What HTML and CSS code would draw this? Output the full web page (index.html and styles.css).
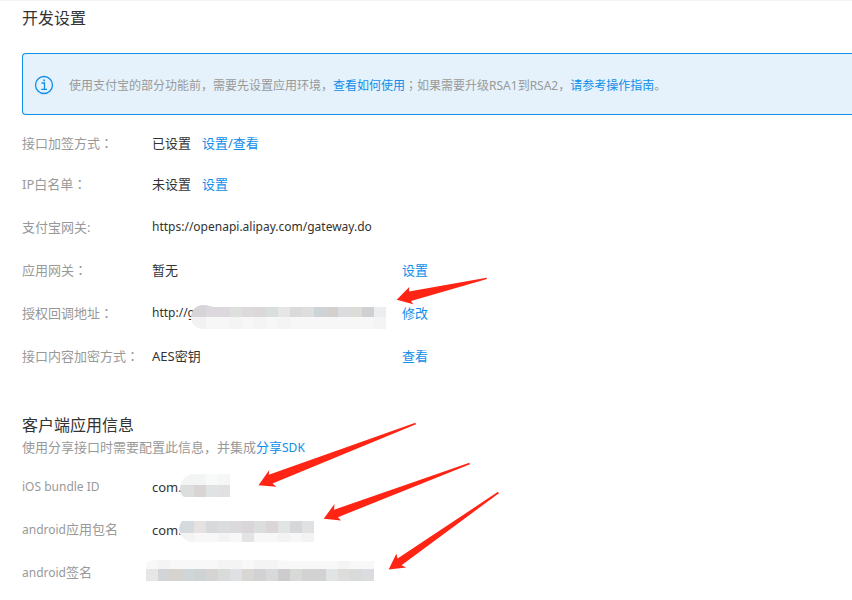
FILE: index.html
```html
<!DOCTYPE html>
<html lang="zh-CN">
<head>
    <meta charset="UTF-8">
    <meta name="viewport" content="width=device-width, initial-scale=1.0">
    <title>开发设置</title>
    <link rel="stylesheet" href="styles.css">
</head>
<body>
    <main class="page">
        <h1 class="title">开发设置</h1>

        <div class="alert">
            <svg class="alert-icon" width="20" height="20" viewBox="0 0 20 20" fill="none" stroke="currentColor" aria-hidden="true">
                <circle cx="10" cy="10" r="8.5" stroke-width="1.3"/>
                <path d="M7.5 8H10.5V14.3M7.2 14.3H13" stroke-width="1.3"/>
                <path d="M9.3 5.3H11" stroke-width="1.7"/>
            </svg>
            <p class="alert-text">使用支付宝的部分功能前，需要先设置应用环境，<a href="#">查看如何使用</a><span class="mid" lang="zh-TW">；</span>如果需要升级RSA1到RSA2，<a href="#">请参考操作指南</a>。</p>
        </div>

        <dl class="settings">
            <div class="row row-short">
                <dt>接口加签方式<span class="mid" lang="zh-TW">：</span></dt>
                <dd>已设置<a class="next" href="#">设置/查看</a></dd>
            </div>
            <div class="row row-short">
                <dt>IP白名单<span class="mid" lang="zh-TW">：</span></dt>
                <dd>未设置<a class="next" href="#">设置</a></dd>
            </div>
            <div class="row">
                <dt>支付宝网关:</dt>
                <dd class="latin">https://openapi.alipay.com/gateway.do</dd>
            </div>
            <div class="row">
                <dt>应用网关<span class="mid" lang="zh-TW">：</span></dt>
                <dd>暂无</dd>
                <dd><a href="#">设置</a></dd>
            </div>
            <div class="row">
                <dt>授权回调地址<span class="mid" lang="zh-TW">：</span></dt>
                <dd class="latin">http://g</dd>
                <dd><a href="#">修改</a></dd>
            </div>
            <div class="row">
                <dt>接口内容加密方式<span class="mid" lang="zh-TW">：</span></dt>
                <dd>AES密钥</dd>
                <dd><a href="#">查看</a></dd>
            </div>
        </dl>

        <h2 class="title">客户端应用信息</h2>
        <p class="hint">使用分享接口时需要配置此信息，并集成<a href="#">分享<span class="latin">SDK</span></a></p>

        <dl class="client">
            <div class="row">
                <dt class="latin">iOS bundle ID</dt>
                <dd>com.</dd>
            </div>
            <div class="row">
                <dt><span class="latin">android</span>应用包名</dt>
                <dd>com.</dd>
            </div>
            <div class="row">
                <dt><span class="latin">android</span>签名</dt>
                <dd></dd>
            </div>
        </dl>

        <!-- mosaics over private values, red arrows -->
        <svg class="marks" width="852" height="600" viewBox="0 0 852 600" aria-hidden="true">
            <defs>
                <clipPath id="clip-url"><path d="M203 305C208 305 211 307 216 307H386V329H203C196 329 191 323 191 317S196 305 203 305Z"/></clipPath>
                <clipPath id="clip-ios"><path d="M192 474H230V497H184C177 493 179 476 192 474Z"/></clipPath>
                <clipPath id="clip-pkg"><path d="M182 521H314V542H192C182 541 175 530 182 521Z"/></clipPath>
                <clipPath id="clip-sign"><path d="M146 564Q147 560 158 560H278L290 561H374V581H146Z"/></clipPath>
            </defs>
            <g clip-path="url(#clip-url)" shape-rendering="crispEdges">
                <path fill="#d7d4d7" d="M190 305h28v12h-28z"/>
                <path fill="#dcd8de" d="M206 307h24v10h-24z"/>
                <path fill="#dde0dc" d="M230 307h12v10h-12z"/>
                <path fill="#dcdadd" d="M242 307h12v10h-12z"/>
                <path fill="#dcd7d8" d="M254 307h12v10h-12z"/>
                <path fill="#d9dee1" d="M266 307h12v10h-12z"/>
                <path fill="#e6e6e6" d="M278 307h12v10h-12z"/>
                <path fill="#dadada" d="M290 307h12v10h-12z"/>
                <path fill="#dfdedf" d="M302 307h12v10h-12z"/>
                <path fill="#cdd4d7" d="M314 307h12v10h-12z"/>
                <path fill="#d4d0d0" d="M326 307h12v10h-12z"/>
                <path fill="#dcdce0" d="M338 307h12v10h-12z"/>
                <path fill="#dcddd8" d="M350 307h12v10h-12z"/>
                <path fill="#cfd0d2" d="M362 307h12v10h-12z"/>
                <path fill="#ebedee" d="M374 307h12v10h-12z"/>
                <path fill="#f7f7f7" d="M190 317h196v12h-196z"/>
                <path fill="#f1f2f1" d="M190 317h16v12h-16z"/>
                <path fill="#f4f4f5" d="M230 317h12v12h-12zM254 317h12v12h-12zM278 317h12v12h-12zM374 317h12v12h-12z"/>
            </g>
            <g clip-path="url(#clip-ios)" shape-rendering="crispEdges">
                <path fill="#f3f4f4" d="M178 474h28v11h-28z"/>
                <path fill="#f8faf9" d="M206 474h12v11h-12z"/>
                <path fill="#f5f7f6" d="M218 474h12v11h-12z"/>
                <path fill="#dcdddd" d="M178 485h16v12h-16z"/>
                <path fill="#d9d5d5" d="M194 485h12v12h-12z"/>
                <path fill="#e0e3e4" d="M206 485h12v12h-12z"/>
                <path fill="#e1e1e1" d="M218 485h12v12h-12z"/>
            </g>
            <g clip-path="url(#clip-pkg)" shape-rendering="crispEdges">
                <path fill="#d5dadf" d="M178 521h16v12h-16z"/>
                <path fill="#e5e2e1" d="M194 521h12v12h-12z"/>
                <path fill="#d8d9db" d="M206 521h12v12h-12z"/>
                <path fill="#dbdcde" d="M218 521h12v12h-12z"/>
                <path fill="#dbd9dc" d="M230 521h12v12h-12z"/>
                <path fill="#d9d5d9" d="M242 521h12v12h-12z"/>
                <path fill="#dbdedd" d="M254 521h12v12h-12z"/>
                <path fill="#dcd5d8" d="M266 521h12v12h-12z"/>
                <path fill="#e0e5e4" d="M278 521h12v12h-12z"/>
                <path fill="#d6d7d9" d="M290 521h12v12h-12z"/>
                <path fill="#e0e1e3" d="M302 521h12v12h-12z"/>
                <path fill="#f7f7f7" d="M178 533h136v9h-136z"/>
                <path fill="#f3f3f3" d="M178 533h16v9h-16zM218 533h12v9h-12zM278 533h12v9h-12zM302 533h12v9h-12z"/>
                <path fill="#e4e4e5" d="M242 533h12v9h-12z"/>
            </g>
            <g clip-path="url(#clip-sign)" shape-rendering="crispEdges">
                <path fill="#f8f8f8" d="M146 560h228v9h-228z"/>
                <path fill="#f4f4f4" d="M158 560h12v9h-12zM218 560h24v9h-24zM254 560h24v9h-24zM338 560h12v9h-12z"/>
                <path fill="#e7e6e4" d="M146 569h12v12h-12z"/>
                <path fill="#d2d5d8" d="M158 569h12v12h-12z"/>
                <path fill="#d6d2cd" d="M170 569h12v12h-12z"/>
                <path fill="#d0d5d8" d="M182 569h12v12h-12z"/>
                <path fill="#cdd2d3" d="M194 569h12v12h-12z"/>
                <path fill="#d6d4d2" d="M206 569h12v12h-12z"/>
                <path fill="#d9dbda" d="M218 569h12v12h-12z"/>
                <path fill="#dfe0e4" d="M230 569h12v12h-12z"/>
                <path fill="#d8d7d4" d="M242 569h12v12h-12z"/>
                <path fill="#d2d2d5" d="M254 569h12v12h-12z"/>
                <path fill="#d8dad9" d="M266 569h12v12h-12z"/>
                <path fill="#cecbce" d="M278 569h12v12h-12z"/>
                <path fill="#d8dad8" d="M290 569h12v12h-12z"/>
                <path fill="#d2d2d2" d="M302 569h24v12h-24z"/>
                <path fill="#e0e4e4" d="M326 569h12v12h-12z"/>
                <path fill="#dedddb" d="M338 569h12v12h-12z"/>
                <path fill="#d8dbda" d="M350 569h12v12h-12z"/>
                <path fill="#dbdce0" d="M362 569h12v12h-12z"/>
            </g>
            <g fill="#ff2414">
                <path d="M396.7 299.7L409.3 287L409 291.5L486.5 277.7L487 279L411 301L413.3 304.3Z"/>
                <path d="M258.5 485.3L269.3 470L268.8 474.7L415.3 422.7L416 424.2L272.5 483.6L276.3 486.7Z"/>
                <path d="M323.7 518.8L334.5 504L334 509.8L469.3 462.8L470 464.2L338 517.2L341 520.4Z"/>
                <path d="M388.7 569.5L396.3 553.7L397.6 558.5L498 491.8L498.9 493.2L401.5 565.3L406.3 567.4Z"/>
            </g>
        </svg>
    </main>
</body>
</html>
```
FILE: styles.css
```css
body {
    margin: 0;
    background-color: #fff;
    color: #333;
    font-family: "Noto Sans", "Noto Sans CJK SC", sans-serif;
    font-size: 13px;
    line-height: 20px;
}

a {
    color: #108ee9;
    text-decoration: none;
}

.page {
    position: relative;
    padding: 5px 0 0 22px;
    border-top: 1px solid #f4f4f4;
}

.title {
    margin: 0;
    font-size: 16px;
    font-weight: 400;
    line-height: 24px;
}

.alert {
    display: flex;
    align-items: center;
    gap: 15px;
    margin-top: 23px;
    padding: 20px 12px 19px 11px;
    border: 1px solid #108ee9;
    border-right: 0;
    border-radius: 4px 0 0 4px;
    background-color: #e5f2fc;
}

.alert-icon {
    flex: none;
    color: #108ee9;
}

.alert-text {
    margin: 0;
    padding-top: 2px;
    color: #999;
    font-size: 12px;
    line-height: 18px;
}

.settings {
    margin: 8px 0 36px;
}

.client {
    margin: 7px 0 0;
}

.row {
    display: grid;
    grid-template-columns: 130px 250px 1fr;
    align-items: center;
    min-height: 43px;
}

.row-short {
    box-sizing: border-box;
    min-height: 41px;
    padding-bottom: 2px;
}

.row dt {
    color: #999;
}

.row dd {
    margin: 0;
}

.row .latin,
.hint .latin {
    font-size: 12px;
}

/* centered full-width punctuation */
.mid {
    font-family: "Noto Sans CJK TC", sans-serif;
}

.next {
    margin-left: 11px;
}

.hint {
    margin: 0;
    color: #999;
}

/* annotations drawn on top of the rows */
.marks {
    position: absolute;
    top: -1px;
    left: 0;
    pointer-events: none;
}
```
